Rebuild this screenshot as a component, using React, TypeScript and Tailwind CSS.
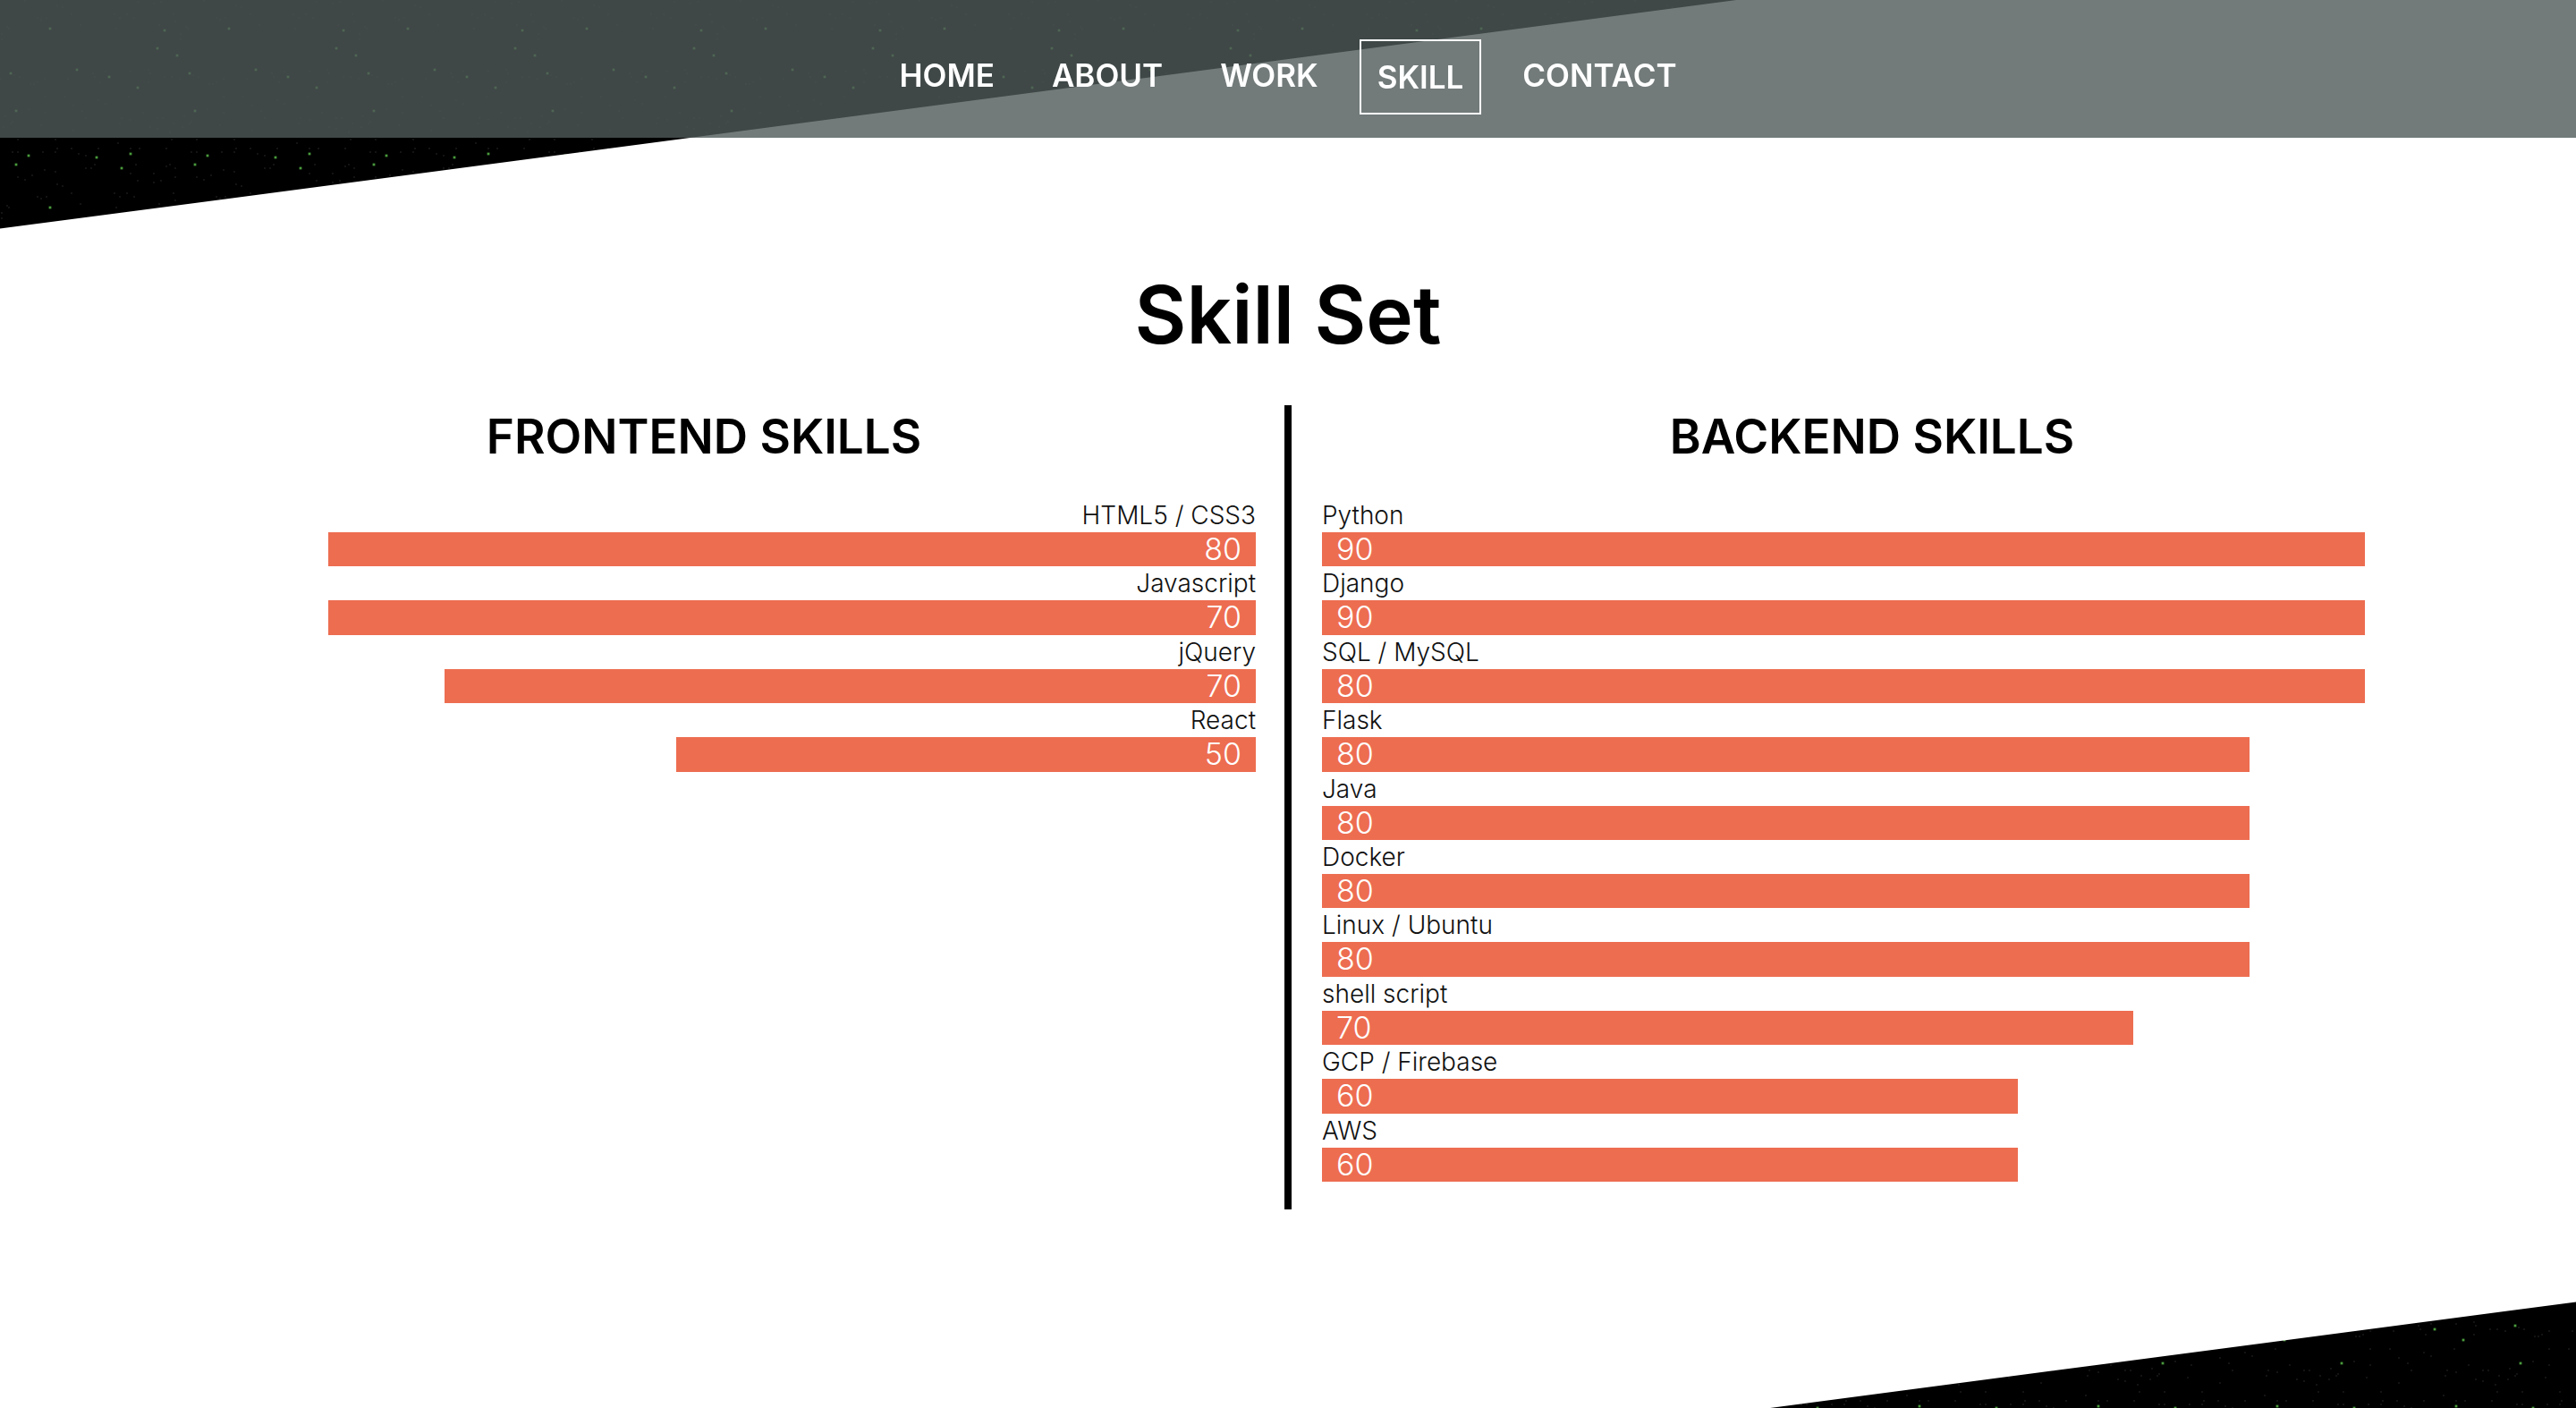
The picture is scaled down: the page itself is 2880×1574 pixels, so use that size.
type Skill = { name: string; score: number; units: number };

const NAV = ["HOME", "ABOUT", "WORK", "SKILL", "CONTACT"];
const ACTIVE = "SKILL";

// units: bar length in tenths of the full track (45% of the window width)
const FRONTEND: Skill[] = [
  { name: "HTML5 / CSS3", score: 80, units: 8 },
  { name: "Javascript", score: 70, units: 8 },
  { name: "jQuery", score: 70, units: 7 },
  { name: "React", score: 50, units: 5 },
];

const BACKEND: Skill[] = [
  { name: "Python", score: 90, units: 9 },
  { name: "Django", score: 90, units: 9 },
  { name: "SQL / MySQL", score: 80, units: 9 },
  { name: "Flask", score: 80, units: 8 },
  { name: "Java", score: 80, units: 8 },
  { name: "Docker", score: 80, units: 8 },
  { name: "Linux / Ubuntu", score: 80, units: 8 },
  { name: "shell script", score: 70, units: 7 },
  { name: "GCP / Firebase", score: 60, units: 6 },
  { name: "AWS", score: 60, units: 6 },
];

// Star positions inside one 200 x 200 tile of the night sky
const BRIGHT = [
  [56, 32], [184, 34], [176, 54], [198, 62], [12, 82], [86, 78], [122, 86],
  [154, 98], [18, 124], [32, 174], [108, 176], [146, 172], [18, 184], [136, 188],
];

const DIM = [
  [20, 156], [62, 156], [192, 156], [14, 170], [20, 170], [48, 170], [62, 170],
  [64, 166], [80, 166], [110, 166], [132, 160], [146, 166], [156, 166], [186, 166],
  [88, 172], [96, 174], [106, 184], [96, 188], [102, 188], [152, 184], [186, 186],
  [190, 184], [196, 188], [50, 190], [62, 192], [36, 196], [28, 1], [20, 198],
  [64, 6], [70, 8], [146, 194], [154, 2], [172, 194], [172, 4], [180, 2],
  [196, 198], [42, 20], [46, 22], [52, 20], [80, 16], [128, 16], [134, 20],
  [142, 16], [150, 20], [90, 28], [130, 32], [178, 28], [194, 16], [196, 24],
  [8, 30], [10, 32], [2, 38], [2, 44], [118, 80], [104, 82], [106, 86],
  [112, 92], [76, 88], [50, 88], [146, 80], [166, 78], [168, 82], [166, 92],
  [184, 86], [192, 86], [1, 88], [16, 84], [22, 86], [34, 94], [38, 94],
  [42, 92], [50, 108], [72, 108], [110, 112], [118, 116], [144, 108], [82, 118],
  [92, 124], [96, 132], [50, 126], [46, 140], [82, 146], [160, 126], [136, 132],
  [134, 138], [146, 134], [176, 132], [182, 132], [168, 142], [176, 144],
  [194, 138], [190, 148], [4, 142], [12, 138], [14, 136], [6, 130], [32, 122],
];

function NightSky() {
  return (
    <svg className="absolute inset-0 h-full w-full" aria-hidden="true">
      <defs>
        <pattern id="stars" width="200" height="200" patternUnits="userSpaceOnUse">
          <rect width="200" height="200" fill="#000000" />
          {DIM.map(([x, y]) => (
            <rect key={`${x}-${y}`} x={x - 1} y={y - 1} width="2" height="2" fill="#131313" />
          ))}
          {BRIGHT.map(([x, y]) => (
            <g key={`${x}-${y}`}>
              <circle cx={x} cy={y} r="2" fill="#1f4519" />
              <rect x={x - 1} y={y - 1} width="2" height="2" fill="#4a9a3c" />
            </g>
          ))}
        </pattern>
      </defs>
      <rect width="100%" height="100%" fill="url(#stars)" />
    </svg>
  );
}

function Header() {
  return (
    <header className="fixed inset-x-0 top-0 z-10 bg-[#4f5959]/80 pt-11 pb-[26px]">
      <nav className="flex items-start justify-center gap-7" aria-label="Main">
        {NAV.map((item) => (
          <a
            key={item}
            href={`#${item.toLowerCase()}`}
            className={
              item === ACTIVE
                ? "border-2 border-white px-[18px] py-4 text-[35px] leading-[48px] font-semibold text-white"
                : "px-[18px] py-4 text-[35px] leading-[48px] font-semibold text-white"
            }
          >
            {item}
          </a>
        ))}
      </nav>
    </header>
  );
}

function SkillColumn({ title, skills, side }: { title: string; skills: Skill[]; side: "left" | "right" }) {
  const left = side === "left";
  return (
    <div>
      <h2 className="text-center text-[53px] leading-[70px] font-semibold">{title}</h2>
      <ul className={left ? "mt-[34px] mr-8 flex flex-col items-end" : "mt-[34px] ml-[34px] flex flex-col items-start"}>
        {skills.map((s) => (
          <li key={s.name} className={left ? "flex flex-col items-end" : "flex flex-col items-start"}>
            <span className="text-[28px] leading-[38px] font-light text-[#111111]">{s.name}</span>
            <div
              className={
                left
                  ? "bg-[#ed6d51] px-4 text-right text-[34px] leading-[2.4rem] font-light text-white"
                  : "bg-[#ed6d51] px-4 text-left text-[34px] leading-[2.4rem] font-light text-white"
              }
              style={{ width: `${s.units * 4.5}vw` }}
            >
              {s.score}
            </div>
          </li>
        ))}
      </ul>
    </div>
  );
}

export default function App() {
  return (
    <div className="relative h-screen overflow-y-auto bg-black font-['Inter','Liberation_Sans',sans-serif] text-black [scrollbar-width:none]">
      <NightSky />
      <Header />
      <main
        id="skill"
        className="relative mt-[66px] px-[138px] pt-[235px] pb-[293px] before:absolute before:inset-0 before:-skew-y-[7.5deg] before:bg-white"
      >
        <div className="relative">
          <h1 className="text-center text-[89px] leading-[102px] font-semibold">Skill Set</h1>
          <div className="mt-[50px] grid grid-cols-[1fr_8px_1fr]">
            <SkillColumn title="FRONTEND SKILLS" skills={FRONTEND} side="left" />
            <div className="bg-black" />
            <div className="pb-[31px]">
              <SkillColumn title="BACKEND SKILLS" skills={BACKEND} side="right" />
            </div>
          </div>
        </div>
      </main>
    </div>
  );
}
